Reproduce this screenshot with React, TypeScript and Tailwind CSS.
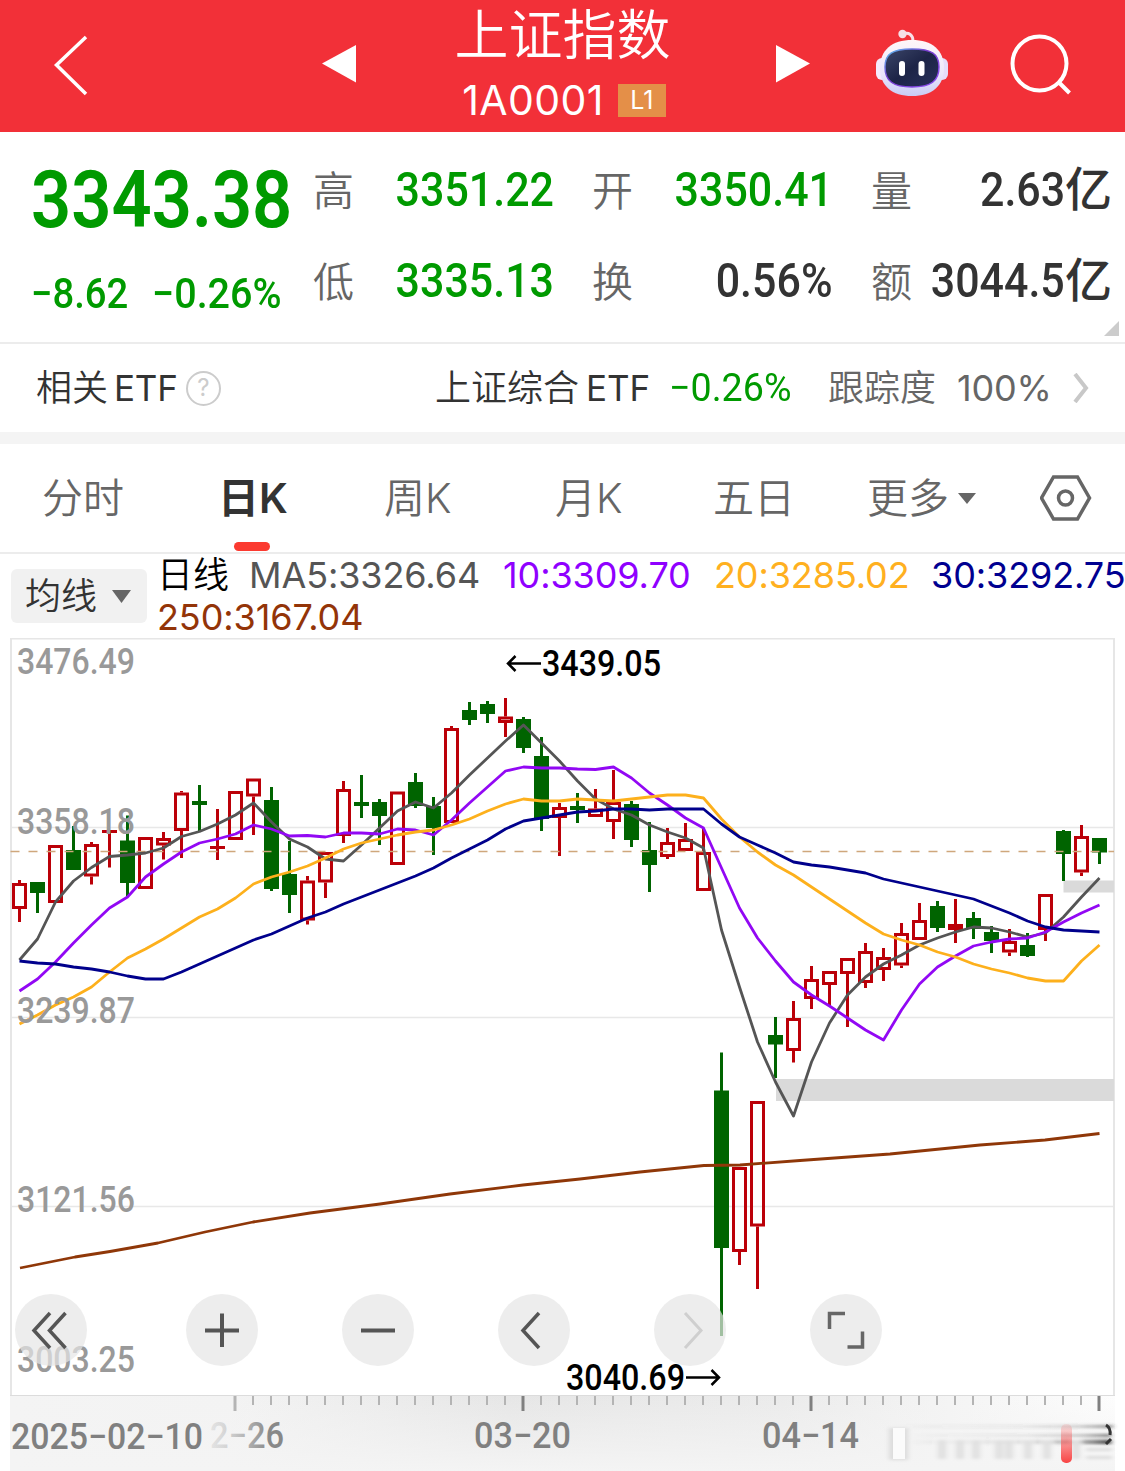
import type { ReactNode } from 'react';

const DIGITS = "font-['Roboto','Noto_Sans_CJK_SC',sans-serif]";

// x step between two trading days, and the first day's centre
const STEP = 18;
const FIRST = 19.5;

type Candle = ['up' | 'down', number, number, number, number];

// direction, high, body top, body bottom, low
const candles: Candle[] = [
  ['up', 880, 883, 909, 922],
  ['down', 882, 882, 893, 913],
  ['up', 845, 845, 903, 903],
  ['down', 826, 850, 870, 870],
  ['up', 842, 844, 876.5, 884.5],
  ['up', 830, 830, 833, 867.5],
  ['down', 815.5, 840.5, 883, 896],
  ['up', 837, 837, 889, 889],
  ['up', 832, 838, 845.5, 859.5],
  ['up', 791, 792.5, 831, 858],
  ['down', 785, 801, 805, 831],
  ['up', 809, 846, 849, 860],
  ['up', 791, 791, 840, 840],
  ['up', 778.5, 778.5, 796.5, 835],
  ['down', 787, 800, 889, 891],
  ['down', 841, 874, 895, 913],
  ['up', 876, 880.5, 920.5, 924.5],
  ['up', 852, 852, 882.5, 898],
  ['up', 781, 789, 836, 843],
  ['down', 775, 802, 806, 818],
  ['down', 799, 802, 816, 845],
  ['up', 791.5, 791.5, 865, 865],
  ['down', 773, 782, 806, 808],
  ['down', 797, 806, 828, 855],
  ['up', 726, 728, 823, 823],
  ['down', 702, 710, 720, 725],
  ['down', 701, 704, 714, 723],
  ['up', 698, 716.5, 723, 737],
  ['down', 717, 719, 748, 753],
  ['down', 737, 756, 819, 831],
  ['up', 803, 807, 818, 856],
  ['down', 793, 806, 810, 823],
  ['up', 789, 808.5, 817, 817],
  ['up', 770, 802, 822, 839],
  ['down', 801, 804, 840, 847],
  ['down', 822, 850, 865, 892],
  ['up', 828, 842, 857, 859],
  ['up', 823, 839, 851, 851],
  ['up', 828, 852, 891, 891],
  ['down', 1052.5, 1090.5, 1248, 1336],
  ['up', 1167, 1167, 1252, 1265],
  ['up', 1101, 1101, 1226.5, 1289],
  ['down', 1017, 1035, 1044.5, 1078],
  ['up', 1001, 1018, 1051, 1062.5],
  ['up', 966, 979, 999, 1009],
  ['up', 971, 971, 985, 1006],
  ['up', 958, 958, 974, 1027],
  ['up', 943, 951, 983, 988],
  ['up', 948, 957, 970, 981],
  ['up', 923, 933, 965.5, 968],
  ['up', 903, 920, 940, 940],
  ['down', 901, 906, 928, 932],
  ['up', 899, 924, 930, 943],
  ['down', 912, 918, 929, 939],
  ['down', 926, 932, 941, 953],
  ['up', 929, 941, 952.5, 956],
  ['down', 933, 945, 956, 957],
  ['up', 894, 894, 930, 941],
  ['down', 830, 831, 854, 881],
  ['up', 825, 836, 872.5, 876],
  ['down', 838, 838, 852.5, 864],
];

const ma5 = [
  960, 939, 902, 881, 867.5, 856.5, 855, 853, 848, 836.5, 831.5, 824, 815, 803, 822, 839, 847, 859, 861, 845, 828,
  811, 802, 808, 793, 775, 758, 741, 725, 743, 761, 781, 799, 809, 815, 825, 832, 838, 848, 930, 987, 1042, 1082,
  1116, 1062, 1023, 995, 977, 964, 955, 945, 938, 932, 927, 928, 932, 937, 933, 917, 897, 878,
];
const ma10 = [
  991, 979, 962, 943, 925, 908, 897, 877, 864, 852, 843, 839, 834, 825, 829, 836, 835.5, 837, 833, 833, 834, 829,
  830, 835, 820, 803, 787, 771, 767, 768, 768, 769, 769.5, 767, 778, 793, 805, 818, 828, 868, 908, 938, 961, 982,
  995, 1006, 1018, 1030, 1040, 1010, 984, 967, 956, 946, 942, 939, 938, 932, 922, 913, 905,
];
const ma20 = [
  1024, 1015, 1005, 997, 987, 972, 958, 949, 939, 928, 917, 909, 898, 884, 877, 872, 866, 858, 849, 843, 839, 835,
  832, 830, 825, 819, 811, 804, 799, 801, 801, 799, 800, 801, 799, 797, 795, 795, 798, 819, 837, 852, 865, 875, 887,
  899, 911, 923, 934, 940, 945, 952, 957, 964, 969, 973, 978, 981, 981, 961, 945,
];
const ma30 = [
  961, 963, 964, 967, 969, 972, 976, 979, 979, 972, 964, 956, 948, 940, 934, 926, 918, 912, 904, 897, 890, 883, 876,
  868, 858, 849, 840, 829, 821, 818, 815, 812, 811, 809, 809, 810, 809, 809, 809, 824, 837, 845, 853, 862, 865, 867,
  870, 873, 879, 883, 887, 891, 895, 899, 906, 913, 921, 927, 930, 931, 932,
];

const scaleLabels = [
  { y: 673.5, text: '3476.49' },
  { y: 833.5, text: '3358.18' },
  { y: 1022.5, text: '3239.87' },
  { y: 1212, text: '3121.56' },
  { y: 1371.5, text: '3003.25' },
];

const tabs = ['分时', '日K', '周K', '月K', '五日'];

function toPoints(values: number[]) {
  return values.map((y, i) => `${FIRST + i * STEP},${y}`).join(' ');
}

export default function App() {
  return (
    <div className="w-[1125px] h-[1471px] overflow-hidden bg-white font-['Inter','Noto_Sans_CJK_SC',sans-serif] text-[#333]">
      <Header />
      <Quote />
      <EtfRow />
      <Tabs />
      <Legend />
      <div className="relative">
        <Chart />
        <Controls />
      </div>
    </div>
  );
}

function Header() {
  return (
    <header className="h-[132px] bg-[#f23038] text-white flex items-start">
      <svg className="w-[320px] h-[132px] shrink-0" fill="none" stroke="#fff">
        <path d="M86 37 L56.500 65 L86 94" strokeWidth="3.500" />
      </svg>
      <svg className="w-[60px] h-[132px] shrink-0">
        <path d="M2 63.500 L36 45 V82.500 Z" fill="#fff" />
      </svg>
      <div className="w-[365px] shrink-0 flex flex-col items-center">
        <h1 className="text-[54px] leading-[68px] pt-[2px] font-[350]">上证指数</h1>
        <div className="flex items-center h-[60px] gap-[14px] pl-[3px]">
          <span className="text-[41px] leading-none font-normal tracking-[0.4px]">1A0001</span>
          <span className="w-[48px] h-[33px] bg-[#e48f48] text-[25px] leading-[33px] text-center">L1</span>
        </div>
      </div>
      <svg className="w-[120px] h-[132px] shrink-0">
        <path d="M31 45 L65 63.500 L31 82.500 Z" fill="#fff" />
      </svg>
      <svg className="w-[80px] h-[132px] shrink-0" viewBox="865 0 80 132" overflow="visible">
        <defs>
          <linearGradient id="shell" x1="0" y1="0" x2="0" y2="1">
            <stop offset="0" stopColor="#fff6f8" />
            <stop offset="0.6" stopColor="#ece6fb" />
            <stop offset="1" stopColor="#c9ccf5" />
          </linearGradient>
          <linearGradient id="rim" x1="0" y1="0" x2="1" y2="1">
            <stop offset="0" stopColor="#58c8f0" />
            <stop offset="0.4" stopColor="#7a3fd0" />
            <stop offset="1" stopColor="#8b4cf0" />
          </linearGradient>
          <linearGradient id="visor" x1="0" y1="0" x2="1" y2="1">
            <stop offset="0" stopColor="#3c4669" />
            <stop offset="0.5" stopColor="#1d2447" />
            <stop offset="1" stopColor="#28305a" />
          </linearGradient>
        </defs>
        <path d="M903 34 C909 32 913 35 913 41" fill="none" stroke="#f8dfe8" strokeWidth="3" />
        <circle cx="902.500" cy="34" r="4.200" fill="#f6dfe6" />
        <rect x="876" y="58" width="14" height="22" rx="6" fill="#f5eafc" />
        <rect x="934" y="58" width="14" height="22" rx="6" fill="#e6dcfa" />
        <path
          d="M912 40 C932 40 944 50 944 68 C944 86 932 96 912 96 C892 96 880 86 880 68 C880 50 892 40 912 40Z"
          fill="url(#shell)"
        />
        <path
          d="M912 49 C932 49 939 54 939 67 C939 81 931 87 912 87 C893 87 885 81 885 67 C885 54 892 49 912 49Z"
          fill="url(#visor)"
          stroke="url(#rim)"
          strokeWidth="1.500"
        />
        <rect x="899" y="61" width="6" height="15" rx="3" fill="#fff" />
        <rect x="918.500" y="61" width="6" height="15" rx="3" fill="#fff" />
      </svg>
      <svg className="w-[160px] h-[132px] shrink-0" viewBox="945 0 160 132" fill="none" stroke="#fff" strokeWidth="4">
        <circle cx="1039.500" cy="63.500" r="27" />
        <path d="M1058.500 82 L1069.500 93" />
      </svg>
    </header>
  );
}

function Quote() {
  return (
    <section className={`relative h-[212px] flex border-b-2 border-[#ececec] ${DIGITS}`}>
      <div className="w-[313px] shrink-0 pl-[31px] pt-[24px] text-[#009a00] whitespace-nowrap">
        <div className="w-fit origin-left scale-x-[0.88] text-[80px] leading-[88px] font-semibold">3343.38</div>
        <div className="flex text-[42px] leading-[50px] font-medium mt-[25px]">
          <span className="w-[121px]">
            <span className="inline-block origin-left scale-x-[0.91]">−8.62</span>
          </span>
          <span className="inline-block origin-left scale-x-[0.94]">−0.26%</span>
        </div>
      </div>
      <div className="grid grid-cols-[241px_241px_241px] grid-rows-[91px_91px] gap-x-[38px] pt-[12px]">
        <Stat label="高" value="3351.22" green />
        <Stat label="开" value="3350.41" green />
        <Stat label="量" value="2.63" unit="亿" />
        <Stat label="低" value="3335.13" green />
        <Stat label="换" value="0.56%" />
        <Stat label="额" value="3044.5" unit="亿" />
      </div>
      <svg className="absolute right-[6px] bottom-[6px] w-[15px] h-[15px]">
        <path d="M15 0 V15 H0 Z" fill="#ccc" />
      </svg>
    </section>
  );
}

interface StatProps {
  label: string;
  value: string;
  unit?: string;
  green?: boolean;
}

function Stat({ label, value, unit, green }: StatProps) {
  return (
    <div className="flex items-center justify-between h-[91px] whitespace-nowrap">
      <span className="w-[41px] shrink-0 text-[41px] leading-none text-[#666] font-[350] pt-[6px]">{label}</span>
      <span className={green ? 'flex items-center text-[#009a00]' : 'flex items-center text-[#333]'}>
        <span className="origin-right scale-x-[0.895] text-[48px] leading-none font-medium">{value}</span>
        {unit && <span className="w-[47px] text-[47px] leading-none font-medium">{unit}</span>}
      </span>
    </div>
  );
}

function EtfRow() {
  return (
    <section className="h-[100px] border-b-12 border-[#f4f4f4] flex items-center text-[36px] leading-none whitespace-nowrap">
      <span className="w-[150px] ml-[36px] flex items-center gap-[6px] font-[350]">
        相关<span className="text-[35px] tracking-[-0.2px] font-normal">ETF</span>
      </span>
      <span className="w-[35px] h-[35px] shrink-0 rounded-full border-[2.5px] border-[#ccc] text-[#ccc] text-[24px] leading-[30px] text-center">
        ?
      </span>
      <span className="w-[234px] ml-[214px] flex items-center gap-[7px] font-[350]">
        上证综合<span className="text-[35px] tracking-[-0.1px] font-normal">ETF</span>
      </span>
      <span className={`w-[159px] ${DIGITS} text-[39px] text-[#009a00]`}>
        <span className="inline-block origin-left scale-x-[0.965]">−0.26%</span>
      </span>
      <span className="w-[129px] text-[#666] font-[350]">跟踪度</span>
      <span className="w-[116px] text-[#666] font-normal tracking-[-0.2px]">100%</span>
      <svg className="w-[18px] h-[30px]" fill="none" stroke="#c8c8c8" strokeWidth="4">
        <path d="M2 1 L13 15 L2 29" />
      </svg>
    </section>
  );
}

function Tabs() {
  return (
    <nav className="h-[110px] border-b-2 border-[#ececec] pl-[42px] grid grid-cols-[176px_166px_171px_158px_154px_173px_1fr] items-center text-[41px] leading-none text-[#666] font-[350] whitespace-nowrap">
      {tabs.map((tab) =>
        tab === '日K' ? (
          <span key={tab} className="relative font-semibold text-[#333]">
            {tab}
            <i className="absolute left-[16px] top-[64px] w-[36px] h-[9px] rounded-full bg-[#fb3a30]" />
          </span>
        ) : (
          <span key={tab}>{tab}</span>
        ),
      )}
      <span className="flex items-center gap-[9px]">
        更多
        <svg className="w-[18px] h-[12px]">
          <path d="M0 1 H18 L9 12 Z" fill="#666" />
        </svg>
      </span>
      <svg className="w-[52px] h-[48px]" fill="none" stroke="#666">
        <path d="M13.500 3 H37.500 L49.500 24 L37.500 45 H13.500 L1.500 24 Z" strokeWidth="3.500" />
        <circle cx="25.500" cy="24" r="7" strokeWidth="3.500" />
      </svg>
    </nav>
  );
}

function Legend() {
  return (
    <section className="h-[84px] flex items-start whitespace-nowrap">
      <button className="ml-[11px] mt-[15px] w-[136px] h-[54px] shrink-0 rounded-md bg-[#f1f1f1] flex items-center pl-[14px] gap-[15px] text-[36px] font-[350]">
        均线
        <svg className="w-[19px] h-[13px]">
          <path d="M0 0 H19 L9.500 13 Z" fill="#666" />
        </svg>
      </button>
      <div className="ml-[10px] text-[36px] leading-[42px] tracking-[-0.1px] font-normal">
        <div className="flex">
          <span className="w-[92px] shrink-0 text-black font-[350]">日线</span>
          <span className="w-[254px] shrink-0 text-[#555]">MA5:3326.64</span>
          <span className="w-[211px] shrink-0 text-[#8f00ff]">10:3309.70</span>
          <span className="w-[217px] shrink-0 text-[#ffb020]">20:3285.02</span>
          <span className="text-[#000090]">30:3292.75</span>
        </div>
        <div className="text-[#933408]">250:3167.04</div>
      </div>
    </section>
  );
}

function Chart() {
  return (
    <svg className="block w-[1125px] h-[833px]" viewBox="0 638 1125 833" fill="none">
      <defs>
        <linearGradient id="axis" x1="0" x2="1">
          <stop offset="0" stopColor="#f4f4f4" />
          <stop offset="0.2" stopColor="#f3f3f3" />
          <stop offset="0.45" stopColor="#e6e6e6" />
          <stop offset="0.7" stopColor="#ebebeb" />
          <stop offset="1" stopColor="#fdfdfd" />
        </linearGradient>
        <linearGradient id="axisFade" x1="0" x2="0" y1="0" y2="1">
          <stop offset="0" stopColor="#f4f4f4" stopOpacity="0" />
          <stop offset="1" stopColor="#f4f4f4" />
        </linearGradient>
        <linearGradient id="dateFade" gradientUnits="userSpaceOnUse" x1="205" x2="270" y1="0" y2="0">
          <stop offset="0" stopColor="#888" stopOpacity="0.1" />
          <stop offset="0.35" stopColor="#888" stopOpacity="0.3" />
          <stop offset="1" stopColor="#888" />
        </linearGradient>
        <linearGradient id="streak" x1="0" x2="1">
          <stop offset="0" stopColor="#444" stopOpacity="0" />
          <stop offset="0.6" stopColor="#444" stopOpacity="0.15" />
          <stop offset="0.85" stopColor="#444" stopOpacity="0.4" />
          <stop offset="1" stopColor="#333" />
        </linearGradient>
        <linearGradient id="marker" x1="0" x2="0" y1="0" y2="1">
          <stop offset="0" stopColor="#ff4040" stopOpacity="0.1" />
          <stop offset="1" stopColor="#f84444" />
        </linearGradient>
        <filter id="soft" x="-20%" width="140%" y="-50%" height="200%">
          <feGaussianBlur stdDeviation="2.500 1.500" />
        </filter>
      </defs>

      {/* Frame and grid */}
      <path d="M10.500 638.500 H1115 M11 638 V1396 M1114 638 V1396" stroke="#e6e6e6" strokeWidth="2" />
      <path d="M12 827.500 H1113 M12 1017.500 H1113 M12 1206.500 H1113" stroke="#e8e8e8" strokeWidth="1.500" />

      {/* Unfilled gaps */}
      <rect x="776" y="1079" width="338" height="22" fill="#dadada" />
      <rect x="1063.500" y="880.500" width="50.500" height="12" fill="#dadada" />

      {candles.map((candle, i) => (
        <CandleShape key={i} x={FIRST + i * STEP} candle={candle} />
      ))}
      <path d="M10.500 851.500 H1114" stroke="#cfa77c" strokeWidth="1.500" strokeDasharray="9 9" />

      {/* Moving averages */}
      <g strokeWidth="2.800" strokeLinejoin="round">
        <path
          d="M20 1268 L75 1257 L110 1251.500 L158 1243 L205 1232 L253 1222 L310 1213 L380 1204 L450 1194 L523 1185 L580 1179 L640 1172 L704 1165.500 L740 1165 L800 1160.500 L890 1154 L980 1145 L1045 1140 L1099.500 1133.500"
          stroke="#8f3708"
        />
        <polyline points={toPoints(ma5)} stroke="#555" />
        <polyline points={toPoints(ma10)} stroke="#9208f4" />
        <polyline points={toPoints(ma20)} stroke="#fdb01c" />
        <polyline points={toPoints(ma30)} stroke="#00008c" />
      </g>

      {/* Price scale */}
      <g className={DIGITS} fontSize="36" fontWeight="500" fill="#999">
        {scaleLabels.map((label) => (
          <text key={label.text} x="17" y={label.y} textLength="118" lengthAdjust="spacingAndGlyphs">
            {label.text}
          </text>
        ))}
      </g>
      <g className={DIGITS} fontSize="36" fontWeight="500" fill="#000">
        <text x="542" y="676" textLength="119" lengthAdjust="spacingAndGlyphs">3439.05</text>
        <text x="566" y="1390" textLength="119" lengthAdjust="spacingAndGlyphs">3040.69</text>
      </g>
      <path d="M541 663.500 H508 M515.500 656 L508 663.500 L515.500 671" stroke="#000" strokeWidth="2.500" />
      <path d="M686 1377.500 H719 M711.500 1370 L719 1377.500 L711.500 1385" stroke="#000" strokeWidth="2.500" />

      {/* Date axis */}
      <rect x="10" y="1396" width="1105" height="75" fill="url(#axis)" />
      <rect x="10" y="1396" width="1105" height="75" fill="url(#axisFade)" />
      <path d="M10 1395.500 H1115" stroke="#dcdcdc" strokeWidth="1" />
      {Array.from({ length: 49 }, (_, k) => {
        const major = k % 16 === 0;
        return (
          <path
            key={k}
            d={`M${235 + k * STEP} 1396 V${major ? 1411 : 1405}`}
            stroke={major && k > 0 ? '#808080' : '#b4b4b4'}
            strokeWidth={major ? 3 : 2}
          />
        );
      })}
      <g className={DIGITS} fontSize="36" fontWeight="500" fill="#808080">
        <text x="11" y="1449" textLength="192" lengthAdjust="spacingAndGlyphs">2025−02−10</text>
        <text x="210" y="1448" textLength="74" lengthAdjust="spacingAndGlyphs" fill="url(#dateFade)">2−26</text>
        <text x="474" y="1448" textLength="97" lengthAdjust="spacingAndGlyphs">03−20</text>
        <text x="762" y="1448" textLength="97" lengthAdjust="spacingAndGlyphs">04−14</text>
      </g>

      {/* Blurred tail of the axis */}
      <g filter="url(#soft)">
        <rect x="885" y="1425" width="228" height="3" fill="url(#streak)" opacity="0.6" />
        <rect x="905" y="1434" width="206" height="3" fill="url(#streak)" opacity="0.7" />
        <rect x="905" y="1440" width="206" height="4" fill="url(#streak)" />
        <rect x="889" y="1428" width="19" height="32" fill="#dcdcdc" />
        {[938, 956, 972, 995, 1005, 1024, 1043, 1072].map((x) => (
          <rect key={x} x={x} y="1440" width="8" height="19" fill="#e0e0e0" />
        ))}
        <rect x="1086" y="1448" width="26" height="3" fill="#dcdcdc" />
        <rect x="1086" y="1456" width="26" height="3" fill="#dcdcdc" />
      </g>
      <rect x="893" y="1428" width="12" height="31" fill="#fbfbfb" />
      <rect x="1061" y="1424" width="11" height="39" rx="5" fill="url(#marker)" />
      <path d="M1106 1425 Q1111 1428 1110 1435 M1111 1439 L1106 1444" stroke="#333" strokeWidth="3" />
    </svg>
  );
}

function CandleShape({ x, candle }: { x: number; candle: Candle }) {
  const [direction, high, top, bottom, low] = candle;
  if (direction === 'down') {
    return (
      <g fill="#006400">
        <rect x={x - 1.5} y={high} width="3" height={low - high} />
        <rect x={x - 7.5} y={top} width="15" height={bottom - top} />
      </g>
    );
  }
  const hollow = bottom - top > 4;
  return (
    <g>
      <path d={`M${x} ${high} V${top} M${x} ${bottom} V${low}`} stroke="#bb0008" strokeWidth="3" />
      {hollow ? (
        <rect x={x - 6} y={top + 1.5} width="12" height={bottom - top - 3} stroke="#bb0008" strokeWidth="3" />
      ) : (
        <rect x={x - 7.5} y={top} width="15" height={bottom - top} fill="#bb0008" />
      )}
    </g>
  );
}

function Controls() {
  return (
    <div className="absolute left-[15px] top-[656px] flex gap-[99px]">
      <RoundButton>
        <path d="M35 19 L19 36.500 L35 54 M50.500 19 L34.500 36.500 L50.500 54" stroke="#555" strokeWidth="3.500" />
      </RoundButton>
      <div className="flex gap-[84px]">
        <RoundButton>
          <path d="M19 36.500 H53 M36 19.500 V53" stroke="#555" strokeWidth="4" />
        </RoundButton>
        <RoundButton>
          <path d="M19 36.500 H53" stroke="#555" strokeWidth="4" />
        </RoundButton>
        <RoundButton>
          <path d="M41 19 L25 36.500 L41 54" stroke="#555" strokeWidth="3.500" />
        </RoundButton>
        <RoundButton>
          <path d="M31 19 L47 36.500 L31 54" stroke="#cfcfcf" strokeWidth="3" />
        </RoundButton>
        <RoundButton>
          <path d="M19.500 35 V19.500 H35 M52.500 37.500 V53 H37.500" stroke="#666" strokeWidth="3.500" />
        </RoundButton>
      </div>
    </div>
  );
}

function RoundButton({ children }: { children: ReactNode }) {
  return (
    <button className="w-[72px] h-[72px] shrink-0 rounded-full bg-[#e5e5e5]/70">
      <svg className="w-[72px] h-[72px]" viewBox="0 0 72 72" fill="none">
        {children}
      </svg>
    </button>
  );
}
